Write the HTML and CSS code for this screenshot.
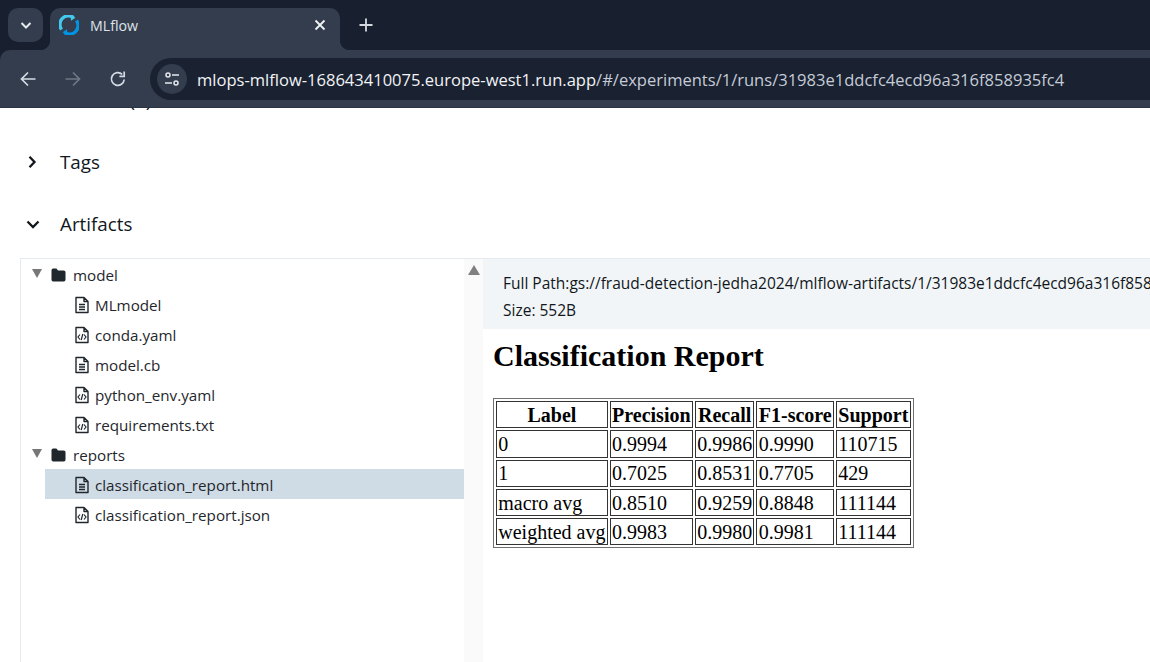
FILE: index.html
```html
<!DOCTYPE html>
<html lang="en">
<head>
    <meta charset="UTF-8">
    <meta name="viewport" content="width=device-width, initial-scale=1.0">
    <title>MLflow</title>
    <link rel="stylesheet" href="styles.css">
</head>
<body>
    <svg class="defs" width="0" height="0">
        <symbol id="icon-file" viewBox="0 0 16 18">
            <path d="M2 1.500h8l4 4v11H2z M10 1.500v4h4" fill="none" stroke="#1f272d" stroke-width="1.400" stroke-linejoin="round"/>
            <path d="M5 8.500h6M5 11h6M5 13.500h6" stroke="#1f272d" stroke-width="1.300"/>
        </symbol>
        <symbol id="icon-code" viewBox="0 0 16 18">
            <path d="M2 1.500h8l4 4v11H2z M10 1.500v4h4" fill="none" stroke="#1f272d" stroke-width="1.400" stroke-linejoin="round"/>
            <path d="M6 8.500l-2 2.500 2 2.500M10 8.500l2 2.500-2 2.500M8.800 8l-1.600 6" fill="none" stroke="#1f272d" stroke-width="1.200"/>
        </symbol>
        <symbol id="icon-folder" viewBox="0 0 15 14">
            <path d="M0.500 2.200Q0.500 0.500 2.200 0.500H5.400L7 2.400H12.800Q14.500 2.400 14.500 4.100V11.800Q14.500 13.500 12.800 13.500H2.200Q0.500 13.500 0.500 11.800z" fill="#1f272d"/>
        </symbol>
    </svg>

    <!-- Browser chrome -->
    <header class="browser">
        <div class="tabstrip">
            <button class="tab-search">
                <svg width="14" height="14" viewBox="0 0 14 14"><path d="M2.500 5l4.500 4.500L11.500 5" fill="none" stroke="#e6e9ee" stroke-width="2"/></svg>
            </button>
            <div class="tab">
                <svg class="favicon" width="20" height="20" viewBox="0 0 20 20">
                    <path d="M2.600 14.500A8.500 8.500 0 0 1 14.500 2.600" fill="none" stroke="#43c9ed" stroke-width="3.400"/>
                    <path d="M17.400 5.500A8.500 8.500 0 0 1 5.500 17.400" fill="none" stroke="#0194e2" stroke-width="3.400"/>
                    <path d="M11.500 0l5 2.800-4.500 3z" fill="#43c9ed"/>
                    <path d="M8.500 20l-5-2.800 4.500-3z" fill="#0194e2"/>
                </svg>
                <span class="tab-title">MLflow</span>
                <svg class="tab-close" width="12" height="12" viewBox="0 0 12 12"><path d="M1.500 1.500l9 9M10.500 1.500l-9 9" stroke="#f1f3f5" stroke-width="1.800"/></svg>
            </div>
            <svg class="new-tab" width="14" height="14" viewBox="0 0 14 14"><path d="M7 0.500v13M0.500 7h13" stroke="#d5d9df" stroke-width="1.800"/></svg>
        </div>
        <div class="toolbar">
            <svg class="nav-icon" width="18" height="18" viewBox="0 0 18 18"><path d="M16.500 9H2.500M9 2.500L2.500 9 9 15.500" fill="none" stroke="#d5dbe4" stroke-width="1.700"/></svg>
            <svg class="nav-icon" width="18" height="18" viewBox="0 0 18 18"><path d="M1.500 9h14M9 2.500L15.500 9 9 15.500" fill="none" stroke="#6f7785" stroke-width="1.700"/></svg>
            <svg class="nav-icon" width="18" height="18" viewBox="0 0 18 18"><path d="M15.200 9.500A6.400 6.400 0 1 1 13.200 4.300" fill="none" stroke="#d5dbe4" stroke-width="1.700"/><path d="M15.200 1.500v4.800h-4.800" fill="none" stroke="#d5dbe4" stroke-width="1.700"/></svg>
            <div class="omnibox">
                <span class="site-chip">
                    <svg width="16" height="14" viewBox="0 0 16 14"><circle cx="4" cy="3" r="2" fill="none" stroke="#e6e9ee" stroke-width="1.500"/><path d="M8 3h7M1 11h7" stroke="#e6e9ee" stroke-width="1.500"/><circle cx="12" cy="11" r="2" fill="none" stroke="#e6e9ee" stroke-width="1.500"/></svg>
                </span>
                <span class="url"><span class="url-host">mlops-mlflow-168643410075.europe-west1.run.app</span>/#/experiments/1/runs/31983e1ddcfc4ecd96a316f858935fc4</span>
            </div>
        </div>
    </header>

    <!-- Page -->
    <main class="page">
        <div class="section section-cut"><span class="section-name">Metrics (2)</span></div>
        <div class="section">
            <svg class="chevron" width="14" height="14" viewBox="0 0 14 14"><path d="M3.500 1.800L8.500 7l-5 5.200" fill="none" stroke="#11171c" stroke-width="2.300"/></svg>
            <span class="section-name">Tags</span>
        </div>
        <div class="section">
            <svg class="chevron" width="14" height="14" viewBox="0 0 14 14"><path d="M1.500 4.500L7 10l5.500-5.500" fill="none" stroke="#11171c" stroke-width="2.300"/></svg>
            <span class="section-name">Artifacts</span>
        </div>

        <div class="artifacts">
            <div class="tree">
                <div class="node"><i class="caret"></i><svg class="folder" width="15" height="14"><use href="#icon-folder"/></svg>model</div>
                <div class="node leaf"><svg class="file" width="16" height="18"><use href="#icon-file"/></svg>MLmodel</div>
                <div class="node leaf"><svg class="file" width="16" height="18"><use href="#icon-code"/></svg>conda.yaml</div>
                <div class="node leaf"><svg class="file" width="16" height="18"><use href="#icon-file"/></svg>model.cb</div>
                <div class="node leaf"><svg class="file" width="16" height="18"><use href="#icon-code"/></svg>python_env.yaml</div>
                <div class="node leaf"><svg class="file" width="16" height="18"><use href="#icon-code"/></svg>requirements.txt</div>
                <div class="node"><i class="caret"></i><svg class="folder" width="15" height="14"><use href="#icon-folder"/></svg>reports</div>
                <div class="node leaf selected"><svg class="file" width="16" height="18"><use href="#icon-file"/></svg>classification_report.html</div>
                <div class="node leaf"><svg class="file" width="16" height="18"><use href="#icon-code"/></svg>classification_report.json</div>
            </div>
            <div class="scrollbar"><i class="scroll-up"></i></div>
            <div class="preview">
                <div class="file-info">
                    <div>Full Path:gs://fraud-detection-jedha2024/mlflow-artifacts/1/31983e1ddcfc4ecd96a316f858935fc4/artifacts/reports/classification_report.html</div>
                    <div>Size: 552B</div>
                </div>
                <div class="report">
                    <h1>Classification Report</h1>
                    <table>
                        <tr><th>Label</th><th>Precision</th><th>Recall</th><th>F1-score</th><th>Support</th></tr>
                        <tr><td>0</td><td>0.9994</td><td>0.9986</td><td>0.9990</td><td>110715</td></tr>
                        <tr><td>1</td><td>0.7025</td><td>0.8531</td><td>0.7705</td><td>429</td></tr>
                        <tr><td>macro avg</td><td>0.8510</td><td>0.9259</td><td>0.8848</td><td>111144</td></tr>
                        <tr><td>weighted avg</td><td>0.9983</td><td>0.9980</td><td>0.9981</td><td>111144</td></tr>
                    </table>
                </div>
            </div>
        </div>
    </main>
</body>
</html>
```

FILE: styles.css
```css
html, body {
    height: 100%;
}

body {
    margin: 0;
    display: flex;
    flex-direction: column;
    overflow: hidden;
    background-color: #fff;
    font-family: "Open Sans", "Noto Sans", sans-serif;
    color: #11171c;
}

.defs {
    position: absolute;
}

/* Browser chrome */
.browser {
    flex: none;
    background-color: #18202f;
    position: relative;
    z-index: 1;
}

.tabstrip {
    height: 50px;
    display: flex;
    align-items: flex-start;
    padding: 8px 0 0 8px;
    box-sizing: border-box;
}

.tab-search {
    width: 35px;
    height: 34px;
    padding: 0;
    border: none;
    border-radius: 10px;
    background-color: #333d4e;
    display: flex;
    align-items: center;
    justify-content: center;
}

.tab {
    position: relative;
    width: 290px;
    height: 42px;
    margin-left: 7px;
    padding: 0 14px 8px 9px;
    box-sizing: border-box;
    display: flex;
    align-items: center;
    background-color: #333d4e;
    border-radius: 10px 10px 0 0;
}

.tab::before, .tab::after {
    content: "";
    position: absolute;
    bottom: 0;
    width: 10px;
    height: 10px;
}

.tab::before {
    left: -10px;
    background: radial-gradient(circle at 0 0, transparent 10px, #333d4e 10.500px);
}

.tab::after {
    right: -10px;
    background: radial-gradient(circle at 100% 0, transparent 10px, #333d4e 10.500px);
}

.favicon {
    flex: none;
}

.tab-title {
    flex: 1;
    margin-left: 11px;
    font-size: 14.200px;
    color: #dfe3e8;
}

.new-tab {
    margin: 10px 0 0 19px;
}

.toolbar {
    height: 58px;
    padding: 0 0 0 19px;
    box-sizing: border-box;
    display: flex;
    align-items: center;
    background-color: #333d4e;
    border-radius: 10px 0 0 0;
    border-bottom: 1px solid #2b3341;
}

.nav-icon {
    flex: none;
    margin-right: 27px;
}

.nav-icon:nth-child(3) {
    margin-right: 23px;
}

.omnibox {
    flex: 1;
    height: 42px;
    min-width: 0;
    margin-top: 1px;
    padding-left: 7px;
    display: flex;
    align-items: center;
    background-color: #1a2130;
    border-radius: 21px 0 0 21px;
}

.site-chip {
    flex: none;
    width: 30px;
    height: 30px;
    display: flex;
    align-items: center;
    justify-content: center;
    border-radius: 50%;
    background-color: #333d4e;
}

.url {
    margin-left: 10px;
    font-size: 16.550px;
    white-space: nowrap;
    color: #c5ccd8;
}

.url-host {
    color: #f1f3f6;
}

/* Page */
.page {
    flex: 1;
    min-height: 0;
    overflow: hidden;
}

.section {
    height: 62px;
    padding-left: 26px;
    display: flex;
    align-items: center;
}

.section-cut {
    margin-top: -39px;
}

.section-cut .section-name {
    margin-left: 34px;
}

.chevron {
    flex: none;
    margin-right: 20px;
}

.section-name {
    font-size: 18.800px;
}

.artifacts {
    display: flex;
    margin: 3px 0 0 20px;
    height: 420px;
    border-left: 1px solid #e4eaf0;
    border-top: 1px solid #e4eaf0;
}

.tree {
    flex: none;
    width: 443px;
    box-sizing: border-box;
    font-size: 15.200px;
}

.node {
    height: 30px;
    padding-top: 2px;
    padding-left: 11px;
    box-sizing: border-box;
    display: flex;
    align-items: center;
    color: #1f272d;
}

.caret {
    flex: none;
    width: 0;
    height: 0;
    margin-right: 9px;
    margin-bottom: 3px;
    border-left: 5px solid transparent;
    border-right: 5px solid transparent;
    border-top: 9px solid #777;
}

.folder {
    flex: none;
    margin: 0 7px 1px 0;
}

.leaf {
    margin-left: 24px;
    padding-left: 29px;
}

.selected {
    background-color: #cfdbe5;
}

.file {
    flex: none;
    margin-right: 5px;
}

.scrollbar {
    flex: none;
    width: 19px;
    background-color: #fafafa;
    display: flex;
    justify-content: center;
}

.scroll-up {
    width: 0;
    height: 0;
    margin-top: 6px;
    border-left: 6.500px solid transparent;
    border-right: 6.500px solid transparent;
    border-bottom: 10px solid #808080;
}

.preview {
    flex: 1;
    min-width: 0;
    overflow: hidden;
}

.file-info {
    height: 70px;
    padding: 11px 0 0 20px;
    box-sizing: border-box;
    background-color: #f2f5f7;
    font-size: 15.500px;
    line-height: 27px;
    white-space: nowrap;
}

.report {
    padding: 0 0 0 10px;
    font-family: "Liberation Serif", serif;
    color: #000;
}

h1 {
    margin: 9px 0 25px;
    font-size: 30px;
    line-height: 35px;
}

table {
    border: 1px solid #707070;
    border-spacing: 2px;
    font-size: 20px;
}

th, td {
    height: 27.300px;
    padding: 1px 1.300px 0;
    box-sizing: border-box;
    border: 1px solid #333;
    line-height: 23px;
}
```
